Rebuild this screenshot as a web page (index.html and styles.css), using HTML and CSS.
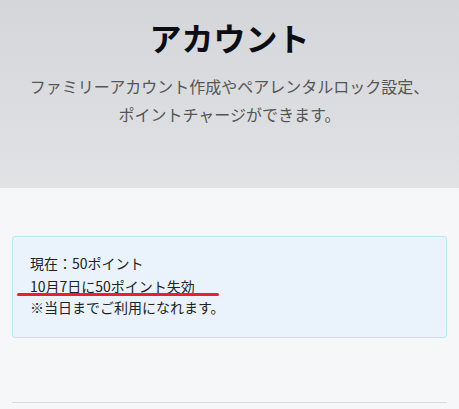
FILE: index.html
```html
<!DOCTYPE html>
<html lang="ja">
<head>
  <meta charset="UTF-8">
  <title>アカウント</title>
  <link rel="stylesheet" href="styles.css">
</head>
<body>
  <header class="hero">
    <h1 class="hero-title">アカウント</h1>
    <p class="hero-lead">ファミリーアカウント作成やペアレンタルロック設定、<br>ポイントチャージができます。</p>
  </header>
  <main class="content">
    <div class="points-box">
      <div class="points-line points-now">現在：50ポイント</div>
      <div class="points-line points-expire">10月7日に50ポイント失効<span class="mark"></span></div>
      <div class="points-line">※当日までご利用になれます。</div>
    </div>
    <hr class="divider">
  </main>
</body>
</html>
```

FILE: styles.css
```css
body {
  margin: 0;
  padding: 0;
  font-family: "Noto Sans CJK JP", "Noto Sans", sans-serif;
  background-color: #f6f7f9;
  color: #222;
}
.hero {
  background: linear-gradient(180deg, #d4d6d9 0%, #dcdde0 60%, #e1e2e4 100%);
  padding: 15px 0 60px;
  text-align: center;
  height: 113px;
}
.hero-title {
  margin: 0;
  font-size: 32px;
  line-height: 45px;
  font-weight: bold;
  color: #0d0d14;
}
.hero-lead {
  margin: 12px 0 0;
  font-size: 16px;
  line-height: 28px;
  color: #555;
}
.content {
  padding: 48px 12px 0;
}
.points-box {
  background-color: #eaf3fb;
  border: 1px solid #bde5f7;
  border-radius: 3px;
  padding: 16px 17px 19px;
  font-size: 14px;
}
.points-line {
  line-height: 21px;
}
.points-now {
  margin-bottom: 2px;
}
.points-expire {
  position: relative;
}
.mark {
  position: absolute;
  left: -13px;
  top: 17px;
  width: 202px;
  height: 3px;
  border-radius: 2px;
  background-color: #e8212b;
}
.divider {
  margin: 64px 0 0;
  border: 0;
  border-top: 1px solid #dcdcdc;
}
```
